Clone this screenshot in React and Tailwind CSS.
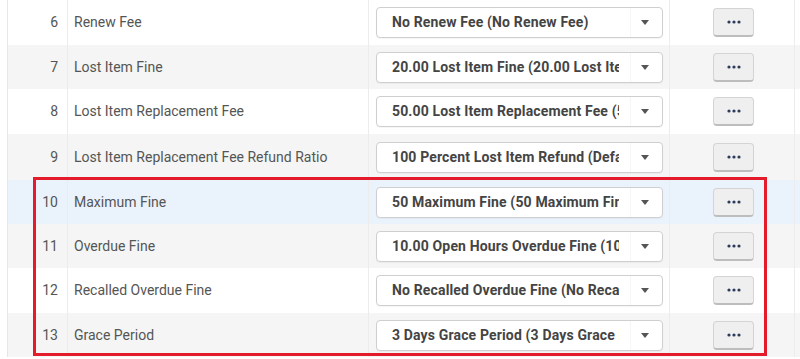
const rows = [
  { n: 6, label: 'Renew Fee', value: 'No Renew Fee (No Renew Fee)', h: 'h-[45px]', bg: 'bg-white' },
  { n: 7, label: 'Lost Item Fine', value: '20.00 Lost Item Fine (20.00 Lost Item Fine)', h: 'h-[44px]', bg: 'bg-[#f4f5f4]' },
  { n: 8, label: 'Lost Item Replacement Fee', value: '50.00 Lost Item Replacement Fee (50.00 Lost Item Replacement Fee)', h: 'h-[45px]', bg: 'bg-white' },
  { n: 9, label: 'Lost Item Replacement Fee Refund Ratio', value: '100 Percent Lost Item Refund (Default)', h: 'h-[46px]', bg: 'bg-[#f4f5f4]' },
  { n: 10, label: 'Maximum Fine', value: '50 Maximum Fine (50 Maximum Fine)', h: 'h-[44px]', bg: 'bg-[#eaf3fc]' },
  { n: 11, label: 'Overdue Fine', value: '10.00 Open Hours Overdue Fine (10.00 Open Hours Overdue Fine)', h: 'h-[44px]', bg: 'bg-[#f4f5f4]' },
  { n: 12, label: 'Recalled Overdue Fine', value: 'No Recalled Overdue Fine (No Recalled Overdue Fine)', h: 'h-[45px]', bg: 'bg-white' },
  { n: 13, label: 'Grace Period', value: '3 Days Grace Period (3 Days Grace Period)', h: 'h-[44px]', bg: 'bg-[#f4f5f4]' },
];

const Dots = () => (
  <svg width="14" height="4" viewBox="0 0 14 4" aria-label="more">
    <circle cx="2" cy="2" r="1.6" fill="#2f3b5c" />
    <circle cx="7" cy="2" r="1.6" fill="#2f3b5c" />
    <circle cx="12" cy="2" r="1.6" fill="#2f3b5c" />
  </svg>
);

const Row = ({ row }) => (
  <div className={`flex ${row.h} ${row.bg}`}>
    <div className="w-[60px] border-l border-[#e6e6e6] flex items-center justify-end pr-[9px] text-[14px] text-[#555]">
      {row.n}
    </div>
    <div className="w-[301px] border-l border-[#ececec] flex items-center pl-[6px] text-[14px] text-[#555]">
      {row.label}
    </div>
    <div className="w-[301px] border-l border-[#ececec] flex items-center pl-[7px]">
      <div className="w-[287px] h-[31px] bg-white border border-[#cfcfcf] rounded-[4px] flex items-center shadow-[0_1px_1px_rgba(0,0,0,0.04)]">
        <div className="w-[242px] pl-[15px] overflow-hidden whitespace-nowrap font-bold text-[14px] text-[#444] tracking-[0.15px]">
          {row.value}
        </div>
        <div className="w-[11px] h-full" />
        <div className="flex-1 h-full border-l border-[#f6f6f6] flex items-center justify-end pr-[13px]">
          <span className="w-0 h-0 border-l-[4px] border-r-[4px] border-t-[5px] border-l-transparent border-r-transparent border-t-[#555]" />
        </div>
      </div>
    </div>
    <div className="w-[126px] border-l border-r border-[#ececec] flex items-center pl-[43px]">
      <button className="w-[41px] h-[29px] rounded-[4px] border border-[#d4d4d4] border-b-[#bdbdbd] border-b-2 bg-[#efefef] flex items-center justify-center">
        <Dots />
      </button>
    </div>
  </div>
);

export default function App() {
  return (
    <div className="w-[800px] h-[359px] bg-white overflow-hidden relative font-['Roboto','Liberation_Sans',sans-serif]">
      <div className="ml-[7px] flex flex-col">
        {rows.map((row) => (
          <Row key={row.n} row={row} />
        ))}
      </div>
      <div className="absolute left-[33px] top-[177px] w-[734px] h-[179px] border-[3px] border-[#e31b2b] pointer-events-none" />
    </div>
  );
}
